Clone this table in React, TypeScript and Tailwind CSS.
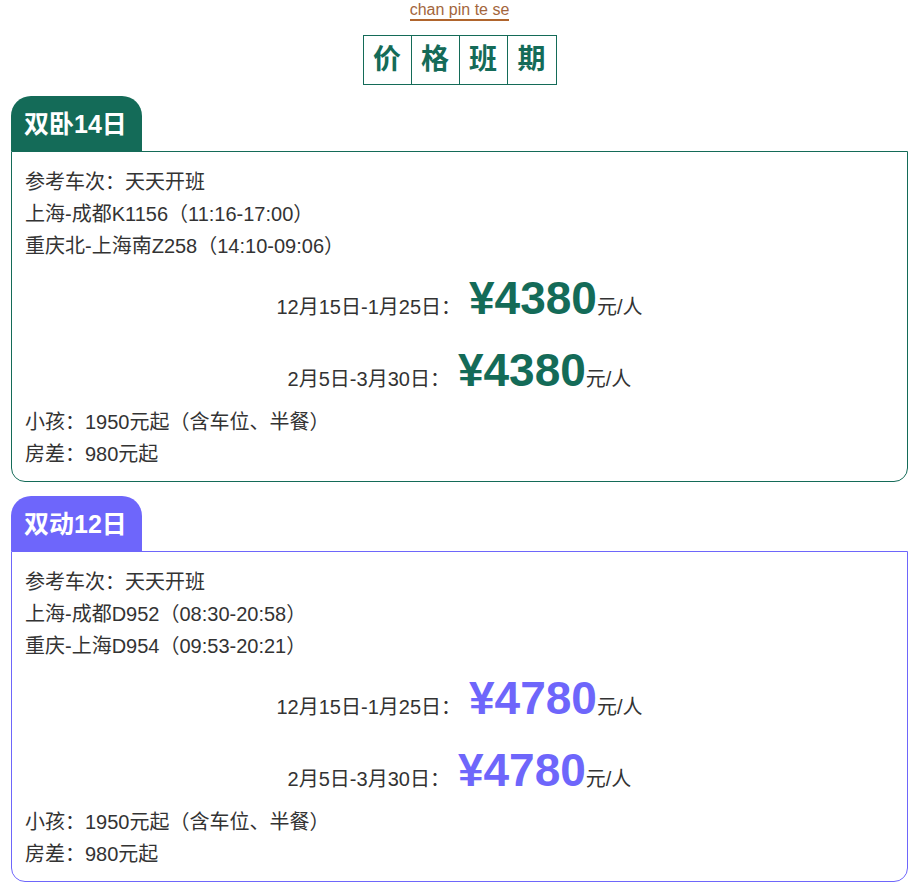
const font = { fontFamily: '"Liberation Sans", "Noto Sans CJK SC", sans-serif' };

type Plan = {
  title: string;
  tabBg: string;
  border: string;
  price: string;
  trains: string[];
  cost: string;
};

const plans: Plan[] = [
  {
    title: "双卧14日",
    tabBg: "bg-[#146b58]",
    border: "border-[#146b58]",
    price: "text-[#146b58]",
    trains: ["参考车次：天天开班", "上海-成都K1156（11:16-17:00）", "重庆北-上海南Z258（14:10-09:06）"],
    cost: "¥4380",
  },
  {
    title: "双动12日",
    tabBg: "bg-[#6e66fb]",
    border: "border-[#6e66fb]",
    price: "text-[#6e66fb]",
    trains: ["参考车次：天天开班", "上海-成都D952（08:30-20:58）", "重庆-上海D954（09:53-20:21）"],
    cost: "¥4780",
  },
];

const dates = ["12月15日-1月25日：", "2月5日-3月30日："];

function PlanCard({ plan }: { plan: Plan }) {
  return (
    <div className="mb-[14px]">
      <div
        className={`flex h-[55px] w-[131px] items-center rounded-t-[20px] pl-[13px] pt-[2px] text-[25px] font-bold text-white ${plan.tabBg}`}
      >
        {plan.title}
      </div>
      <div className={`rounded-b-[14px] border pl-[13px] pr-[13px] pt-[14px] pb-[11px] text-[20px] leading-8 text-[#333] ${plan.border}`}>
        {plan.trains.map((t) => (
          <div key={t}>{t}</div>
        ))}
        {dates.map((d) => (
          <div key={d} className="flex h-[72px] items-baseline justify-center">
            <span>{d}</span>
            <span className={`ml-[8px] text-[46px] font-bold leading-[72px] ${plan.price}`}>{plan.cost}</span>
            <span>元/人</span>
          </div>
        ))}
        <div>小孩：1950元起（含车位、半餐）</div>
        <div>房差：980元起</div>
      </div>
    </div>
  );
}

export default function App() {
  return (
    <div className="min-h-screen bg-white pl-[11px] pr-[16px]" style={font}>
      <div className="flex flex-col items-center">
        <span className="mt-[1px] border-b-2 border-[#b0652d] text-[16px] leading-[18px] text-[#a3653c]">
          chan pin te se
        </span>
        <div className="mt-[14px] flex border border-[#146b58] text-[28px] font-bold text-[#146b58]">
          {["价", "格", "班", "期"].map((c, i) => (
            <div
              key={c}
              className={`flex h-[48px] w-[48px] items-center justify-center ${i < 3 ? "border-r border-[#146b58]" : ""}`}
            >
              {c}
            </div>
          ))}
        </div>
      </div>
      <div className="mt-[11px]">
        {plans.map((p) => (
          <PlanCard key={p.title} plan={p} />
        ))}
      </div>
    </div>
  );
}
